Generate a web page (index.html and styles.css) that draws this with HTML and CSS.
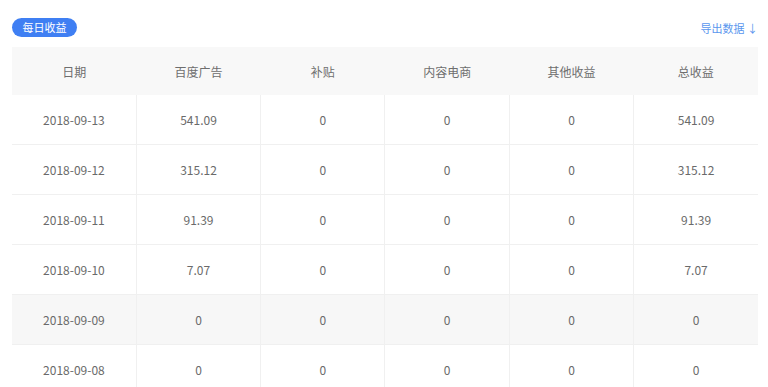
FILE: index.html
```
<!DOCTYPE html>
<html lang="zh">
<head>
<meta charset="utf-8">
<link rel="stylesheet" href="styles.css">
</head>
<body>
<div class="page">
  <div class="topbar">
    <span class="badge">每日收益</span>
    <a class="export">导出数据 ↓</a>
  </div>
  <table class="grid">
    <thead>
      <tr><th>日期</th><th>百度广告</th><th>补贴</th><th>内容电商</th><th>其他收益</th><th>总收益</th></tr>
    </thead>
    <tbody>
      <tr><td>2018-09-13</td><td>541.09</td><td>0</td><td>0</td><td>0</td><td>541.09</td></tr>
      <tr><td>2018-09-12</td><td>315.12</td><td>0</td><td>0</td><td>0</td><td>315.12</td></tr>
      <tr><td>2018-09-11</td><td>91.39</td><td>0</td><td>0</td><td>0</td><td>91.39</td></tr>
      <tr><td>2018-09-10</td><td>7.07</td><td>0</td><td>0</td><td>0</td><td>7.07</td></tr>
      <tr class="hover"><td>2018-09-09</td><td>0</td><td>0</td><td>0</td><td>0</td><td>0</td></tr>
      <tr><td>2018-09-08</td><td>0</td><td>0</td><td>0</td><td>0</td><td>0</td></tr>
    </tbody>
  </table>
</div>
</body>
</html>
```
FILE: styles.css
```
html, body {
  margin: 0;
  padding: 0;
  background: #fff;
  overflow: hidden;
}
body {
  font-family: "Noto Sans CJK SC", "Noto Sans", sans-serif;
  color: #666;
  font-size: 12px;
}
.page {
  width: 746px;
  padding: 18px 0 0 12px;
}
.topbar {
  display: flex;
  justify-content: space-between;
  align-items: center;
  height: 19px;
  margin-bottom: 10px;
}
.badge {
  display: inline-flex;
  align-items: center;
  justify-content: center;
  width: 65px;
  height: 19px;
  border-radius: 10px;
  background: #3f7ff3;
  color: #fff;
  font-size: 11px;
  line-height: 1;
}
.export {
  color: #5b97ee;
  font-size: 11px;
  margin-top: 1px;
}
.grid {
  width: 746px;
  border-collapse: collapse;
  table-layout: fixed;
}
.grid th {
  height: 48px;
  background: #f8f8f8;
  font-weight: normal;
  color: #6e6e6e;
  font-size: 12px;
  padding: 0;
  text-align: center;
}
.grid td {
  height: 49px;
  padding: 0;
  text-align: center;
  color: #6a6a6a;
  font-size: 12px;
  border-bottom: 1px solid #f0f0f0;
  border-left: 1px solid #f0f0f0;
}
.grid td:first-child {
  border-left: none;
}
.grid tr.hover td {
  background: #f7f7f7;
}
```
